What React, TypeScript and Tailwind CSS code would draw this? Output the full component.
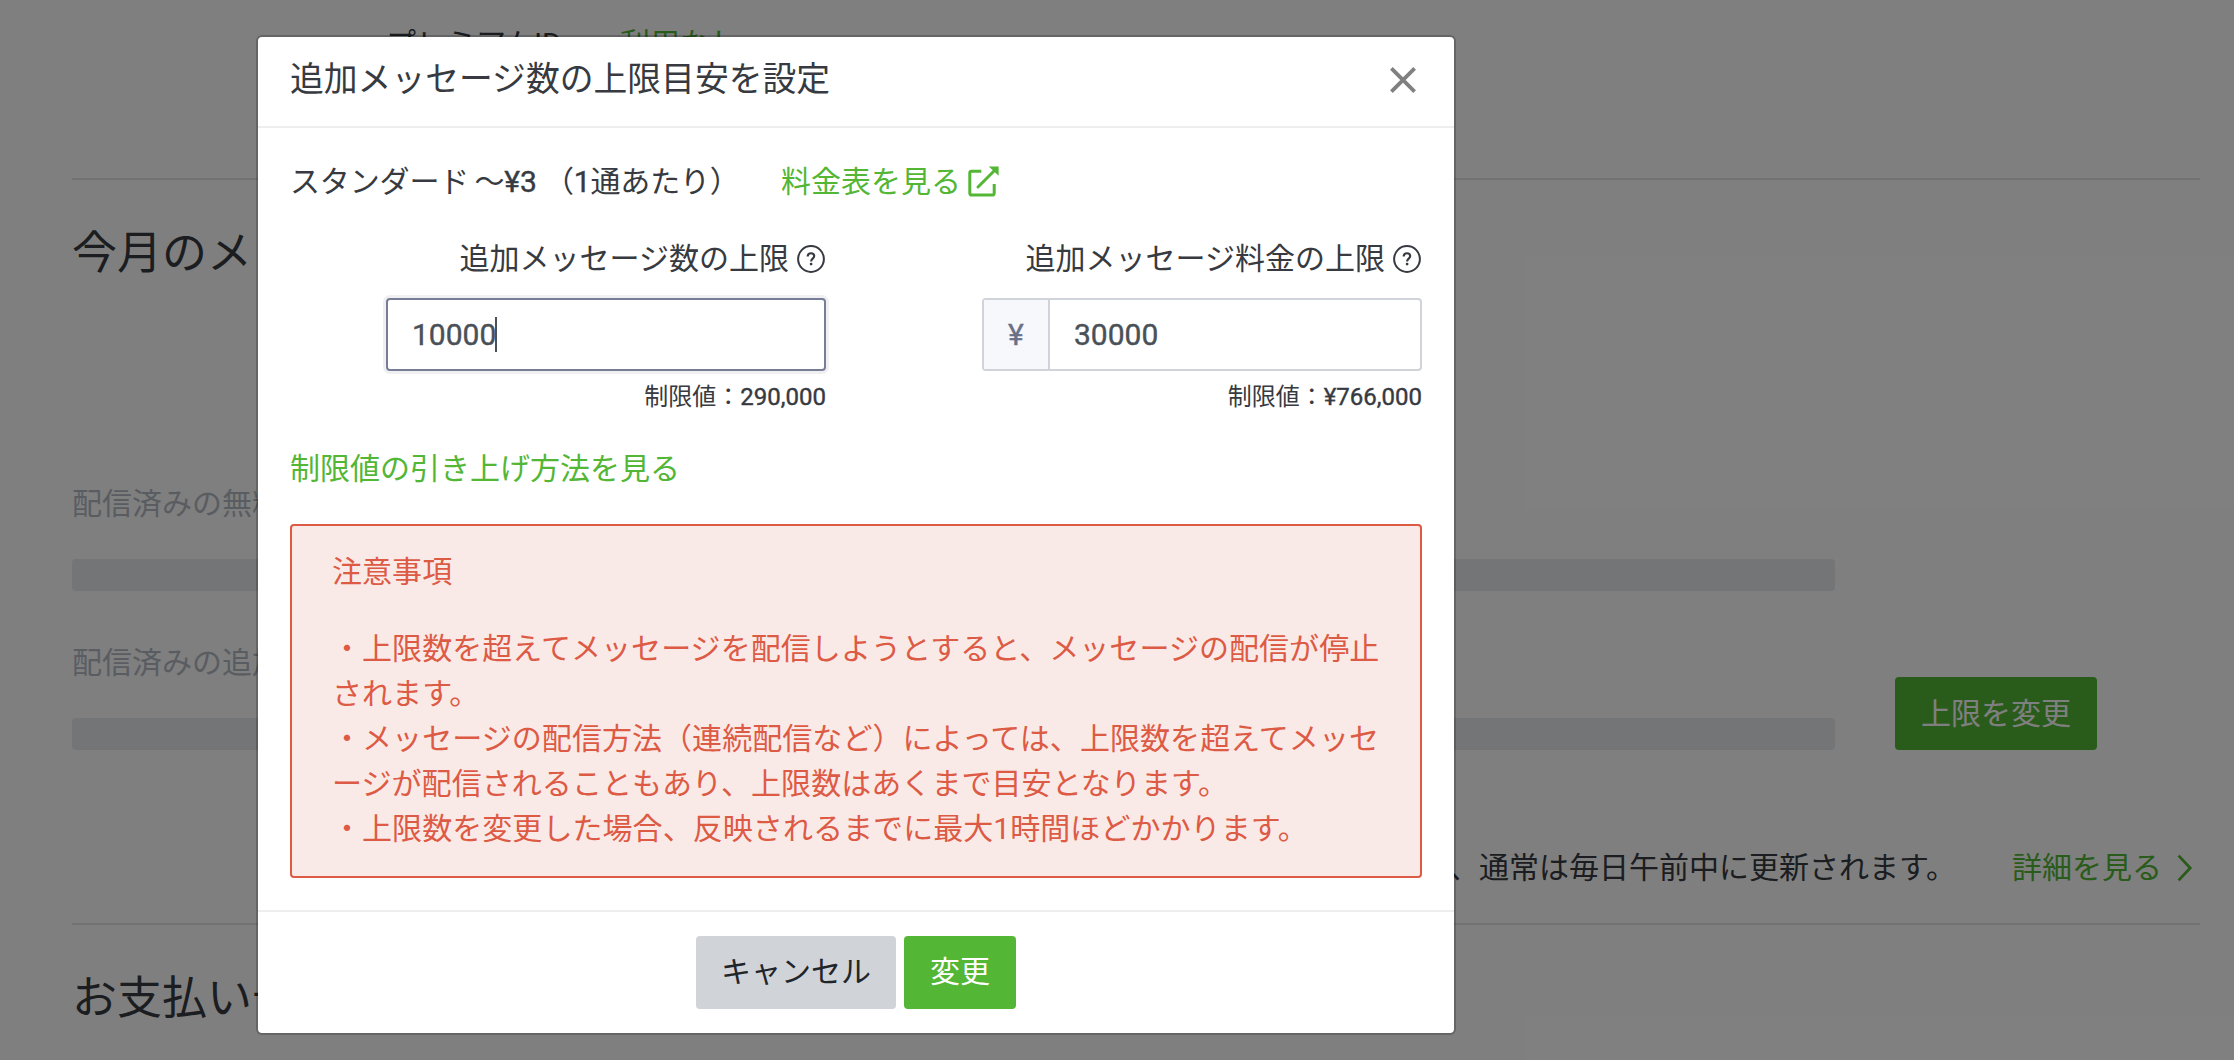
import React from 'react';
import clsx from 'clsx';

function ExternalLinkIcon() {
  return (
    <svg width="31" height="31" viewBox="0 0 31 31" fill="none" stroke="currentColor" strokeWidth="3">
      <path d="M13.3 5.3H3.6a1.8 1.8 0 0 0-1.8 1.8v20.2a1.8 1.8 0 0 0 1.8 1.8h20.8a1.8 1.8 0 0 0 1.8-1.8V18" />
      <path d="M10 21L27 4" strokeLinecap="round" />
      <path d="M20.8 0.4H30.6V9.8Z" fill="currentColor" stroke="none" />
    </svg>
  );
}

function HelpIcon() {
  return (
    <svg width="28" height="28" viewBox="0 0 28 28" fill="none" stroke="currentColor">
      <circle cx="14" cy="14" r="12.9" strokeWidth="2" />
      <path d="M10.7 11.4c0-2 1.4-3.2 3.3-3.2s3.2 1.2 3.2 2.9c0 2.5-3.1 2.6-3.1 5.3" strokeWidth="2.1" />
      <circle cx="14.1" cy="19.1" r="1.4" fill="currentColor" stroke="none" />
    </svg>
  );
}

function CloseIcon() {
  return (
    <svg width="26" height="26" viewBox="0 0 26 26" fill="none" stroke="currentColor" strokeWidth="3.8">
      <path d="M1.4 1.4l23.2 23.2M24.6 1.4L1.4 24.6" />
    </svg>
  );
}

interface UsageBarProps {
  label: string;
  className?: string;
}

function UsageBar({ label, className }: UsageBarProps) {
  return (
    <div className={clsx('w-[1763px]', className)}>
      <p className="h-[45px] leading-[45px] text-[#b3bbc4]">{label}</p>
      <div className="mt-[33px] h-8 w-full rounded-[4px] bg-[#e8eaed]" />
    </div>
  );
}

function BillingPage() {
  return (
    <main className="flex h-full flex-col pr-[34px] pl-[72px] whitespace-nowrap">
      <section className="flex h-[180px] border-b-2 border-[#e4e4e4] pt-[21px] pl-[314px]">
        <p className="w-[234px] leading-[45px]">プレミアムID</p>
        <p className="leading-[45px] text-[#53b635]">利用なし</p>
      </section>

      <section className="flex h-[745px] flex-col border-b-2 border-[#e4e4e4]">
        <h2 className="mt-10 h-[68px] text-[45px] leading-[68px]">今月のメッセージ配信数</h2>
        <UsageBar label="配信済みの無料メッセージ" className="mt-[193px]" />
        <div className="mt-[49px] flex items-end justify-between pr-[103px]">
          <UsageBar label="配信済みの追加メッセージ" />
          <button className="h-[73px] w-[202px] rounded-[4px] bg-[#53b635] pb-px text-white">上限を変更</button>
        </div>
        <div className="mt-[95px] flex items-center justify-end pr-[7px] leading-[45px]">
          <p>メッセージ配信数は、通常は毎日午前中に更新されます。</p>
          <a className="ml-[56px] flex items-center text-[#53b635]">
            詳細を見る
            <svg className="ml-[15px]" width="16" height="28" viewBox="0 0 16 28" fill="none" stroke="currentColor" strokeWidth="2.8">
              <path d="M1.6 1.6l11.6 12.4L1.6 26.4" />
            </svg>
          </a>
        </div>
      </section>

      <h2 className="mt-10 h-[68px] text-[45px] leading-[68px]">お支払い予定金額</h2>
    </main>
  );
}

// Latin digits need a little extra weight next to the kana
function Num({ children }: { children: React.ReactNode }) {
  return <span className="[-webkit-text-stroke:0.4px_currentColor]">{children}</span>;
}

interface LimitFieldProps {
  label: string;
  value: string;
  limit: string;
  prefix?: string;
  focused?: boolean;
}

function LimitField({ label, value, limit, prefix, focused }: LimitFieldProps) {
  return (
    <div className="flex w-[440px] flex-col items-end">
      <div className="flex h-[45px] items-center gap-2 pr-px">
        <span className="leading-[45px]">{label}</span>
        <HelpIcon />
      </div>
      <div
        className={clsx(
          'mt-[17px] flex h-[73px] w-full rounded-[4px] border-2 bg-white',
          focused ? 'border-[#777d95] shadow-[0_0_0_3px_#f0f0f3]' : 'border-[#d0d3d9]',
        )}
      >
        {prefix && (
          <span className="flex w-[66px] items-center justify-center border-r-2 border-[#d0d3d9] bg-[#f7f8fb] text-[#6a7088]">
            <Num>{prefix}</Num>
          </span>
        )}
        <span className="flex items-center pl-6 text-[#495057]">
          <Num>{value}</Num>
          {focused && <span className="-ml-px h-[35px] w-[2px] bg-[#495057]" />}
        </span>
      </div>
      <p className="mt-2 text-2xl leading-9">
        制限値：<Num>{limit}</Num>
      </p>
    </div>
  );
}

const notes = [
  '・上限数を超えてメッセージを配信しようとすると、メッセージの配信が停止',
  'されます。',
  '・メッセージの配信方法（連続配信など）によっては、上限数を超えてメッセ',
  'ージが配信されることもあり、上限数はあくまで目安となります。',
  '・上限数を変更した場合、反映されるまでに最大1時間ほどかかります。',
];

function LimitDialog() {
  return (
    <div className="flex h-[1000px] w-[1200px] flex-col rounded-[6px] border-2 border-black/20 bg-white bg-clip-padding whitespace-nowrap">
      <header className="flex h-[91px] justify-between border-b-2 border-[#eeeeee] pr-[38px] pl-8">
        <h1 className="mt-[17px] h-[51px] text-[33.8px] leading-[51px]">追加メッセージ数の上限目安を設定</h1>
        <button className="mt-[30px] h-[26px] text-[#808080]">
          <CloseIcon />
        </button>
      </header>

      <div className="flex flex-1 flex-col px-8 pt-[31px]">
        <div className="flex h-[45px] items-center leading-[45px]">
          <p className="w-[491px] tracking-[-0.15px]">
            スタンダード<span className="-ml-0.5"> 〜</span>
            <Num>¥3</Num> （<Num>1</Num>通あたり）
          </p>
          <a className="flex items-center gap-[7px] text-[#53b635]">
            料金表を見る
            <ExternalLinkIcon />
          </a>
        </div>

        <div className="mt-8 flex justify-between pl-24">
          <LimitField label="追加メッセージ数の上限" value="10000" limit="290,000" focused />
          <LimitField label="追加メッセージ料金の上限" value="30000" limit="¥766,000" prefix="¥" />
        </div>

        <a className="mt-[31px] h-[45px] leading-[45px] text-[#53b635]">制限値の引き上げ方法を見る</a>

        <div className="mt-[33px] h-[354px] rounded-[4px] border-2 border-[#dd5a45] bg-[#faeae7] pt-[23px] pl-10 leading-[45px] tracking-[0.06px] text-[#dd5a45]">
          <p>注意事項</p>
          <div className="mt-8">
            {notes.map((line) => (
              <p key={line}>{line}</p>
            ))}
          </div>
        </div>
      </div>

      <footer className="flex h-[123px] items-start justify-center gap-2 border-t-2 border-[#eeeeee] pt-6">
        <button className="h-[73px] w-[200px] rounded-[4px] bg-[#d0d3d8] pb-0.5 text-[#212529]">キャンセル</button>
        <button className="h-[73px] w-28 rounded-[4px] bg-[#53b635] pb-0.5 text-white">変更</button>
      </footer>
    </div>
  );
}

export default function App() {
  return (
    <div
      lang="ja"
      className="relative h-[1060px] w-[2234px] overflow-hidden bg-white font-['Roboto','Noto_Sans_CJK_JP',sans-serif] text-[30px] text-[#373a40]"
    >
      <BillingPage />
      <div className="absolute inset-0 bg-black/50 pt-[35px] pl-64">
        <LimitDialog />
      </div>
    </div>
  );
}
